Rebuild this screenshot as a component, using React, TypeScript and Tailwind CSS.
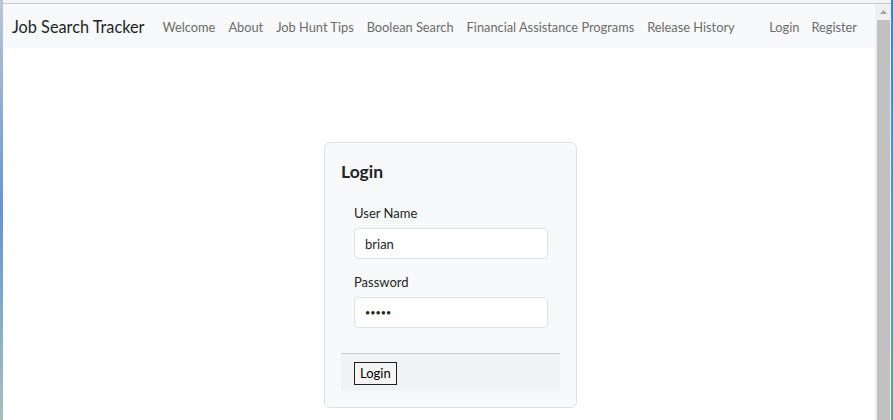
import React from 'react';

const links = [
  'Welcome',
  'About',
  'Job Hunt Tips',
  'Boolean Search',
  'Financial Assistance Programs',
  'Release History',
];

function Navbar() {
  return (
    <nav className="flex h-[44px] items-center whitespace-nowrap bg-[#f8f9fa] pl-[9px] pr-[18px] pt-[3px]">
      <span className="mr-[18px] text-[16.3px] text-[#212529]">Job Search Tracker</span>
      <ul className="flex items-center gap-[13px] text-[12.8px] text-[#6c6c6c]">
        {links.map((l) => (
          <li key={l}>{l}</li>
        ))}
      </ul>
      <ul className="ml-auto flex items-center gap-[12px] text-[12.8px] text-[#6c6c6c]">
        <li>Login</li>
        <li>Register</li>
      </ul>
    </nav>
  );
}

function Field({ label, value, type }: { label: string; value: string; type: string }) {
  return (
    <div className="flex flex-col">
      <label className="text-[13px] leading-[20px] text-[#212529]">{label}</label>
      <input
        readOnly
        type={type}
        value={value}
        className={
          type === 'password'
            ? 'mt-[5px] h-[31px] w-[194px] rounded-[4px] border border-[#dee2e6] bg-white px-[10px] text-[9px] text-[#212529] outline-none'
            : 'mt-[5px] h-[31px] w-[194px] rounded-[4px] border border-[#dee2e6] bg-white px-[10px] text-[13px] text-[#212529] outline-none'
        }
      />
    </div>
  );
}

function LoginCard() {
  return (
    <div className="ml-[321px] mt-[94px] w-[253px] rounded-[6px] border border-[#dee2e6] bg-[#f8f9fa] px-[16px] pb-[16px] pt-[17px]">
      <h2 className="text-[17.5px] font-bold leading-[24px] text-[#212529]">Login</h2>
      <div className="mt-[19px] flex flex-col gap-[13px] pl-[13px]">
        <Field label="User Name" value="brian" type="text" />
        <Field label="Password" value="brian" type="password" />
      </div>
      <div className="mt-[25px] border-t border-[#c8c8c8] bg-[#f1f2f3] px-[13px] pb-[6px] pt-[6px]">
        <button className="h-[23px] border border-[#1f1f1f] bg-[#f5f5f5] px-[5px] text-[13px] leading-[20px] text-black">
          Login
        </button>
      </div>
    </div>
  );
}

function Scrollbar() {
  return (
    <div className="flex w-[16px] shrink-0 flex-col items-center bg-[#f0f0f0]">
      <div className="flex h-[16px] items-center justify-center">
        <svg width="7" height="4" viewBox="0 0 7 4">
          <polygon points="0,4 3.5,0 7,4" fill="#a3a3a3" />
        </svg>
      </div>
      <div className="w-[13px] flex-1 bg-[#c1c1c1]" />
    </div>
  );
}

export default function App() {
  return (
    <div
      className="flex h-[420px] w-[893px] overflow-hidden bg-white"
      style={{ fontFamily: 'Lato, "Noto Sans", sans-serif' }}
    >
      <div className="w-[3px] shrink-0 bg-gradient-to-b from-[#b9c6d6] via-[#6595d0] to-[#a4c0bd]" />
      <div className="flex min-w-0 flex-1 flex-col">
        <div className="h-[4px] border-b border-[#c9c9c9] bg-[#f2f4f6]" />
        <div className="flex min-w-0 flex-1">
          <main className="min-w-0 flex-1 overflow-hidden bg-white">
            <Navbar />
            <LoginCard />
          </main>
          <Scrollbar />
        </div>
      </div>
      <div className="w-[2px] shrink-0 bg-gradient-to-b from-[#3f7fc8] via-[#5d93b8] to-[#6e9a8e]" />
    </div>
  );
}
